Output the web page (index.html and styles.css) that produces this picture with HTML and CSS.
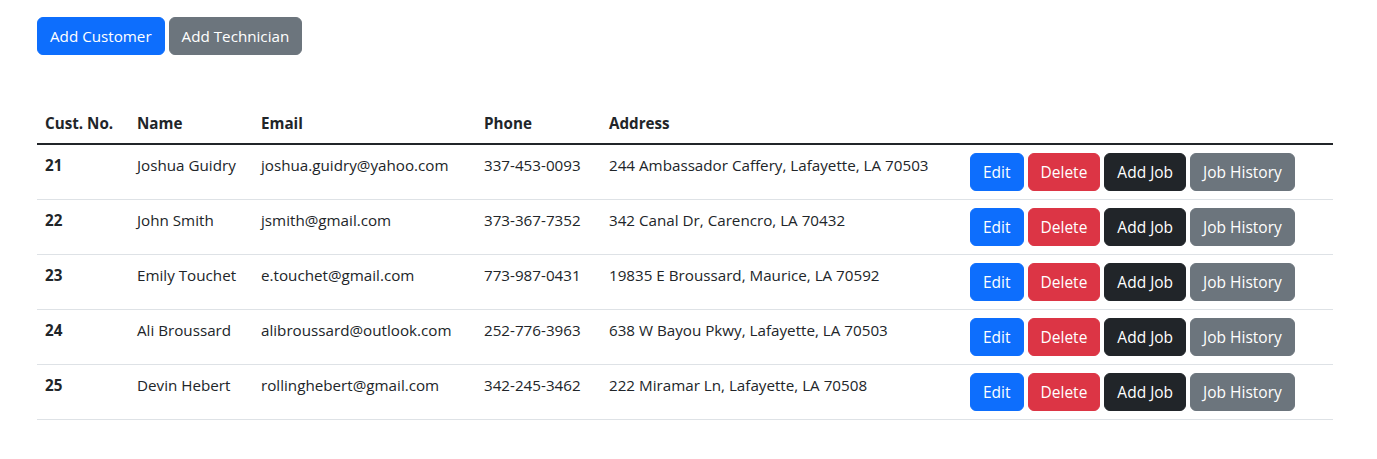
FILE: index.html
```html
<!DOCTYPE html>
<html>
<head>
<meta charset="utf-8">
<link rel="stylesheet" href="styles.css">
</head>
<body>
<div class="container">
  <div class="toolbar">
    <button class="btn btn-primary">Add Customer</button>
    <button class="btn btn-secondary">Add Technician</button>
  </div>
  <table class="table">
    <colgroup>
      <col class="c-no"><col class="c-name"><col class="c-email"><col class="c-phone"><col class="c-addr"><col class="c-act">
    </colgroup>
    <thead>
      <tr><th>Cust. No.</th><th>Name</th><th>Email</th><th>Phone</th><th>Address</th><th></th></tr>
    </thead>
    <tbody>
      <tr><th>21</th><td>Joshua Guidry</td><td>joshua.guidry@yahoo.com</td><td>337-453-0093</td><td>244 Ambassador Caffery, Lafayette, LA 70503</td>
        <td><div class="actions"><button class="btn btn-primary">Edit</button><button class="btn btn-danger">Delete</button><button class="btn btn-dark">Add Job</button><button class="btn btn-secondary">Job History</button></div></td></tr>
      <tr><th>22</th><td>John Smith</td><td>jsmith@gmail.com</td><td>373-367-7352</td><td>342 Canal Dr, Carencro, LA 70432</td>
        <td><div class="actions"><button class="btn btn-primary">Edit</button><button class="btn btn-danger">Delete</button><button class="btn btn-dark">Add Job</button><button class="btn btn-secondary">Job History</button></div></td></tr>
      <tr><th>23</th><td>Emily Touchet</td><td>e.touchet@gmail.com</td><td>773-987-0431</td><td>19835 E Broussard, Maurice, LA 70592</td>
        <td><div class="actions"><button class="btn btn-primary">Edit</button><button class="btn btn-danger">Delete</button><button class="btn btn-dark">Add Job</button><button class="btn btn-secondary">Job History</button></div></td></tr>
      <tr><th>24</th><td>Ali Broussard</td><td>alibroussard@outlook.com</td><td>252-776-3963</td><td>638 W Bayou Pkwy, Lafayette, LA 70503</td>
        <td><div class="actions"><button class="btn btn-primary">Edit</button><button class="btn btn-danger">Delete</button><button class="btn btn-dark">Add Job</button><button class="btn btn-secondary">Job History</button></div></td></tr>
      <tr><th>25</th><td>Devin Hebert</td><td>rollinghebert@gmail.com</td><td>342-245-3462</td><td>222 Miramar Ln, Lafayette, LA 70508</td>
        <td><div class="actions"><button class="btn btn-primary">Edit</button><button class="btn btn-danger">Delete</button><button class="btn btn-dark">Add Job</button><button class="btn btn-secondary">Job History</button></div></td></tr>
    </tbody>
  </table>
</div>
</body>
</html>
```
FILE: styles.css
```css
* { box-sizing: border-box; }
html, body { margin: 0; background: #fff; }
body {
  font-family: "Open Sans", "Noto Sans", sans-serif;
  font-size: 15.2px;
  line-height: 24px;
  color: #212529;
}
.container {
  width: 1296px;
  margin-left: 37px;
  padding-top: 17px;
}
.toolbar { display: flex; gap: 4px; }
.btn {
  font-family: inherit;
  font-size: 15.5px;
  line-height: 24px;
  padding: 6px 12px;
  border: 1px solid transparent;
  border-radius: 6px;
  color: #fff;
  cursor: pointer;
}
.toolbar .btn { font-size: 15.2px; }
.btn-primary { background: #0d6efd; border-color: #0d6efd; }
.btn-secondary { background: #6c757d; border-color: #6c757d; }
.btn-danger { background: #dc3545; border-color: #dc3545; }
.btn-dark { background: #212529; border-color: #212529; }

.table {
  width: 1296px;
  margin-top: 48px;
  border-collapse: collapse;
  table-layout: fixed;
}
.c-no { width: 92px; }
.c-name { width: 124px; }
.c-email { width: 223px; }
.c-phone { width: 125px; }
.c-addr { width: 361px; }
.c-act { width: 371px; }
.table th, .table td {
  padding: 8px;
  text-align: left;
  vertical-align: top;
  border-bottom: 1px solid #dee2e6;
  white-space: nowrap;
}
.table th { font-weight: 700; }
.table thead th { border-bottom: 2px solid #212529; }
.actions { display: flex; gap: 4px; }
```
